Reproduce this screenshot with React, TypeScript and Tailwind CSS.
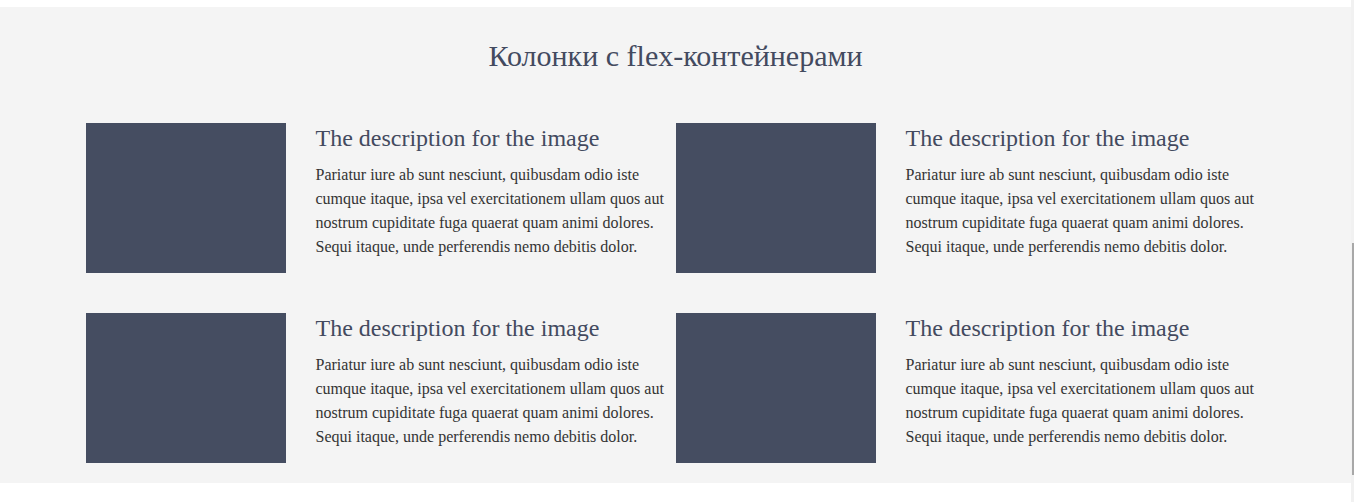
export default function App() {
  const items = [0, 1, 2, 3];

  return (
    <div className="flex min-h-[502px] bg-white" style={{ fontFamily: '"Liberation Serif", "Times New Roman", serif' }}>
      <div className="flex-1 pt-[7px]">
        <section className="bg-[#f4f4f4] pt-[32px] pb-[20px]">
          <h2 className="text-center text-[30px] leading-[34px] text-[#434a5f] mb-[50px]">
            Колонки с flex-контейнерами
          </h2>
          <div className="mx-auto w-[1180px] grid grid-cols-2 gap-y-[40px]">
            {items.map((i) => (
              <div key={i} className="flex">
                <div className="w-[200px] h-[150px] bg-[#454d61] shrink-0" />
                <div className="ml-[30px] pr-[10px]">
                  <h3 className="text-[24px] leading-[30px] text-[#434a5f] mb-[10px]">The description for the image</h3>
                  <p className="text-[16px] leading-[24px] text-[#333333]">
                    Pariatur iure ab sunt nesciunt, quibusdam odio iste cumque itaque, ipsa vel exercitationem ullam quos aut nostrum cupiditate fuga quaerat quam animi dolores. Sequi itaque, unde perferendis nemo debitis dolor.
                  </p>
                </div>
              </div>
            ))}
          </div>
        </section>
      </div>
      <div className="w-[3px] bg-[#f1f1f1] flex flex-col">
        <div className="h-[243px]" />
        <div className="h-[232px] bg-[#a8a8a8] ml-[1px]" />
      </div>
    </div>
  );
}
